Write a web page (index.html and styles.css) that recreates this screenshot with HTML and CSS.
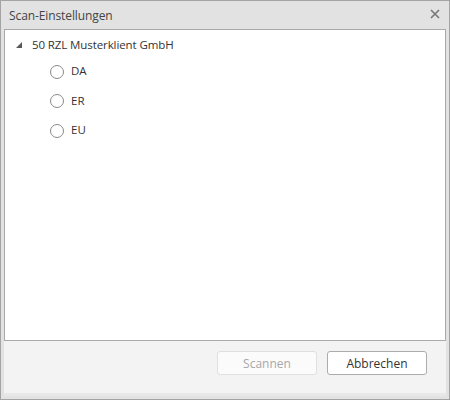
FILE: index.html
```html
<!DOCTYPE html>
<html lang="de">
<head>
<meta charset="utf-8">
<link rel="stylesheet" href="styles.css">
</head>
<body>
<div class="window">
  <div class="titlebar">
    <span class="title">Scan-Einstellungen</span>
    <svg class="close" width="10" height="10" viewBox="0 0 10 10"><path d="M1 1 L9 9 M9 1 L1 9" stroke="#777" stroke-width="1.6"/></svg>
  </div>
  <div class="content">
    <div class="node">
      <svg class="expander" width="6" height="6" viewBox="0 0 6 6"><path d="M6 0 L6 6 L0 6 Z" fill="#595959"/></svg>
      <span class="node-label">50 RZL Musterklient GmbH</span>
    </div>
    <div class="children">
      <label class="item"><span class="radio"></span><span>DA</span></label>
      <label class="item"><span class="radio"></span><span>ER</span></label>
      <label class="item"><span class="radio"></span><span>EU</span></label>
    </div>
  </div>
  <div class="footer">
    <button class="btn disabled">Scannen</button>
    <button class="btn">Abbrechen</button>
  </div>
</div>
</body>
</html>
```
FILE: styles.css
```css
* { box-sizing: border-box; }
html, body { margin: 0; padding: 0; background: #fff; }
body { font-family: "Open Sans", "Noto Sans", sans-serif; font-size: 11.5px; color: #333; }
.window {
  width: 450px; height: 400px;
  border: 1px solid #a4a4a4;
  background: #e2e2e2;
  display: flex; flex-direction: column;
  padding: 0 3px 3px 3px;
}
.titlebar {
  height: 28px; flex: none;
  display: flex; align-items: center; justify-content: space-between;
  padding: 0 6px 0 5px;
}
.title { color: #444; font-size: 12px; letter-spacing: -0.1px; }
.close { display: block; margin-top: -2px; }
.content {
  height: 312px; flex: none;
  background: #fff;
  border: 1px solid #a9a9a9;
  padding: 5px 0 0 11px;
}
.node { display: flex; align-items: center; height: 18px; }
.expander { display: block; margin-right: 10px; margin-top: 1px; }
.node-label { color: #333; letter-spacing: -0.1px; }
.children { display: flex; flex-direction: column; padding-left: 34px; padding-top: 3px; }
.item { display: flex; align-items: center; height: 29.5px; }
.radio {
  width: 14px; height: 14px; border-radius: 50%;
  border: 1px solid #8a8a8a; background: #fff;
  margin-right: 7px; margin-top: 2px;
}
.footer {
  flex: 1;
  background: #f3f3f3;
  border-bottom: 3px solid #e8e8e8;
  display: flex; justify-content: flex-end; align-items: flex-start;
  padding: 10px 19px 0 0;
  gap: 10px;
}
.btn {
  width: 100px; height: 24px;
  font-family: inherit; font-size: 12px;
  background: #fff; color: #333;
  border: 1px solid #acacac; border-radius: 3px;
  padding: 0;
}
.btn.disabled { color: #a8a8a8; border-color: #e0e0e0; background: #fbfbfb; }
```
